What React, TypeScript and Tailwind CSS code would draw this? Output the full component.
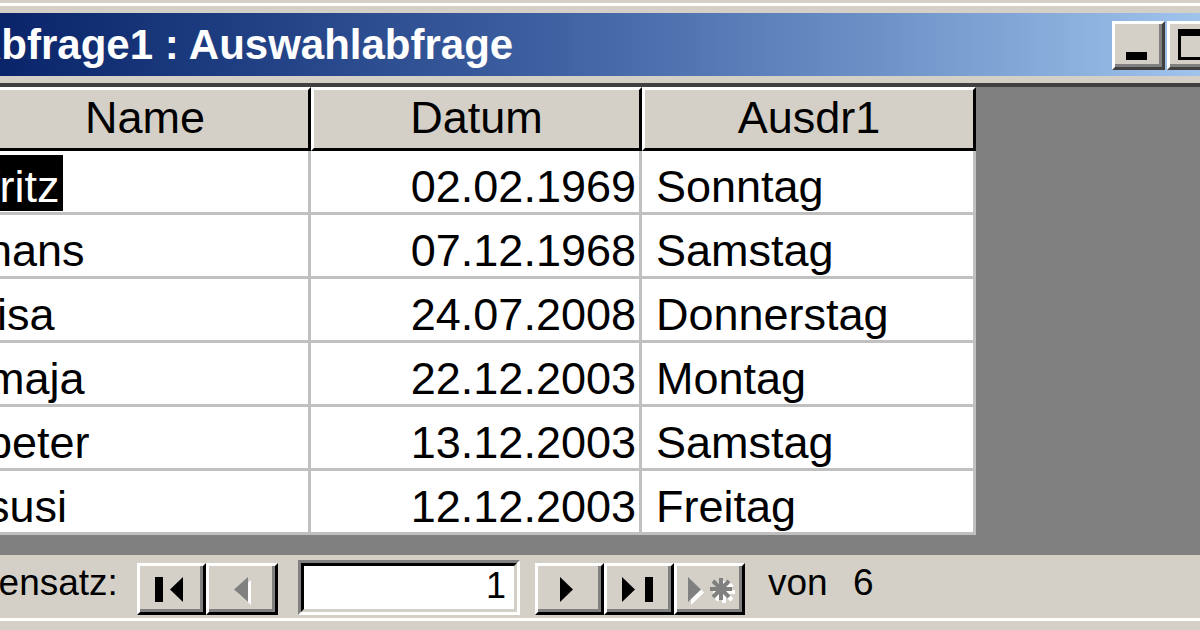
import React from "react";

const F = "font-['Liberation_Sans',Arial,sans-serif]";

const rows: [string, string, string][] = [
  ["fritz", "02.02.1969", "Sonntag"],
  ["hans", "07.12.1968", "Samstag"],
  ["lisa", "24.07.2008", "Donnerstag"],
  ["maja", "22.12.2003", "Montag"],
  ["peter", "13.12.2003", "Samstag"],
  ["susi", "12.12.2003", "Freitag"],
];

function NavButton({
  x,
  w,
  wClass,
  children,
}: {
  x: number;
  w: number;
  wClass: string;
  children: React.ReactNode;
}) {
  return (
    <div
      className={`${wClass} shrink-0 h-[52px] mt-[8px] bg-[#d4d0c8] border-t-[3px] border-l-[3px] border-r-[3px] border-b-[3px] border-t-white border-l-white border-r-black border-b-black`}
    >
      <div className="w-full h-full border-r-[3px] border-b-[3px] border-r-[#808080] border-b-[#808080]">
        <svg
          width={w - 9}
          height={43}
          viewBox={`${x + 3} 566 ${w - 9} 43`}
          className="block"
        >
          {children}
        </svg>
      </div>
    </div>
  );
}

function Asterisk({ dx, dy, color }: { dx: number; dy: number; color: string }) {
  const cx = 721 + dx;
  const cy = 589 + dy;
  return (
    <g stroke={color} strokeWidth={4} fill={color}>
      <line x1={cx} y1={cy - 11} x2={cx} y2={cy + 11} />
      <line x1={cx - 11} y1={cy} x2={cx + 11} y2={cy} />
      <line x1={cx - 8} y1={cy - 8} x2={cx + 8} y2={cy + 8} />
      <line x1={cx + 8} y1={cy - 8} x2={cx - 8} y2={cy + 8} />
      <circle cx={cx} cy={cy} r={5} stroke="none" />
    </g>
  );
}

export default function App() {
  return (
    <div
      className={`w-[1200px] h-[630px] overflow-hidden bg-[#d4d0c8] flex flex-col text-black ${F}`}
    >
      <div className="h-[3px] shrink-0" />
      <div className="h-[3px] shrink-0 bg-white" />
      <div className="h-[7px] shrink-0" />

      {/* Title bar */}
      <div className="h-[63px] shrink-0 w-[1240px] flex bg-linear-to-r from-[#0a246a] via-[#3f62a3] via-45% to-[#a6caf0]">
        <div className="flex-1 ml-[-29px] pt-[11px] text-white font-bold text-[42px] leading-[42px] whitespace-nowrap">
          Abfrage1 : Auswahlabfrage
        </div>
        <div className="flex gap-[2px] mt-[8px] mr-[20px] shrink-0">
          <div className="w-[53px] h-[49px] bg-[#d4d0c8] border-t-[3px] border-l-[3px] border-r-[3px] border-b-[3px] border-t-white border-l-white border-r-[#404040] border-b-[#404040]">
            <div className="w-full h-full border-r-[3px] border-b-[3px] border-r-[#808080] border-b-[#808080]">
              <svg width={44} height={40} viewBox="1115 24 44 40" className="block">
                <rect x={1126} y={52} width={21} height={8} fill="#000" />
              </svg>
            </div>
          </div>
          <div className="w-[53px] h-[49px] bg-[#d4d0c8] border-t-[3px] border-l-[3px] border-r-[3px] border-b-[3px] border-t-white border-l-white border-r-[#404040] border-b-[#404040]">
            <div className="w-full h-full border-r-[3px] border-b-[3px] border-r-[#808080] border-b-[#808080]">
              <svg width={44} height={40} viewBox="1170 24 44 40" className="block">
                <rect x={1178} y={29} width={27} height={7} fill="#000" />
                <rect x={1178} y={29} width={3} height={31} fill="#000" />
                <rect x={1202} y={29} width={3} height={31} fill="#000" />
                <rect x={1178} y={57} width={27} height={3} fill="#000" />
              </svg>
            </div>
          </div>
        </div>
      </div>

      <div className="h-[7px] shrink-0" />
      <div className="h-[4px] shrink-0 bg-[#404040]" />

      {/* Datasheet area */}
      <div className="h-[468px] shrink-0 bg-[#808080] flex">
        <div className="ml-[-21px] shrink-0 flex flex-col">
          <div className="flex h-[64px] shrink-0">
            {[
              ["w-[332px]", "Name"],
              ["w-[331px]", "Datum"],
              ["w-[334px]", "Ausdr1"],
            ].map(([w, t]) => (
              <div
                key={t}
                className={`${w} h-full bg-[#d4d0c8] border-t-[3px] border-l-[3px] border-r-[3px] border-b-[3px] border-t-white border-l-white border-r-black border-b-black text-center text-[45px] leading-[44px] pt-[6px]`}
              >
                {t}
              </div>
            ))}
          </div>
          {rows.map(([name, date, day], i) => (
            <div key={name} className="flex h-[64px] shrink-0 text-[45px] leading-[44px]">
              <div
                className={`w-[332px] h-full bg-white border-r-[3px] border-b-[3px] border-[#c0c0c0] flex items-start pl-[5px] ${
                  i === 0 ? "pt-[4px]" : "pt-[14px]"
                }`}
              >
                {i === 0 ? (
                  <span className="bg-black text-white px-[3px] pt-[10px] pb-[2px]">{name}</span>
                ) : (
                  <span className="px-[3px]">{name}</span>
                )}
              </div>
              <div className="w-[331px] h-full bg-white border-r-[3px] border-b-[3px] border-[#c0c0c0] flex items-start justify-end pt-[14px]">
                <span className="px-[3px]">{date}</span>
              </div>
              <div className="w-[334px] h-full bg-white border-r-[3px] border-b-[3px] border-[#c0c0c0] flex items-start pl-[11px] pt-[14px]">
                <span className="px-[3px]">{day}</span>
              </div>
            </div>
          ))}
        </div>
      </div>

      {/* Navigation bar */}
      <div className="h-[63px] shrink-0 flex items-start">
        <div className="w-[196px] ml-[-59px] shrink-0 mt-[10px] text-[37px] leading-[36px] whitespace-nowrap">
          Datensatz:
        </div>
        <NavButton x={137} w={69} wClass="w-[69px]">
          <rect x={155} y={577} width={8} height={25} fill="#000" />
          <polygon points="183,577 183,602 170,589.5" fill="#000" />
        </NavButton>
        <NavButton x={206} w={72} wClass="w-[72px]">
          <polygon points="251,580 251,605 237,592.5" fill="#fff" />
          <polygon points="248,577 248,602 234,589.5" fill="#808080" />
        </NavButton>
        <div className="ml-[20px] mt-[5px] w-[222px] h-[55px] shrink-0 border-t-[3px] border-l-[3px] border-r-[3px] border-b-[3px] border-t-[#808080] border-l-[#808080] border-r-white border-b-white">
          <div className="w-full h-full bg-white border-t-[3px] border-l-[3px] border-r-[3px] border-b-[3px] border-t-black border-l-black border-r-[#d4d0c8] border-b-[#d4d0c8] text-right pr-[8px] pt-[4px] text-[36px] leading-[32px]">
            1
          </div>
        </div>
        <div className="ml-[15px] flex shrink-0">
          <NavButton x={535} w={69} wClass="w-[69px]">
            <polygon points="560,577 560,602 573,589.5" fill="#000" />
          </NavButton>
          <NavButton x={604} w={70} wClass="w-[70px]">
            <polygon points="622,577 622,602 635,589.5" fill="#000" />
            <rect x={645} y={577} width={8} height={25} fill="#000" />
          </NavButton>
          <NavButton x={674} w={71} wClass="w-[71px]">
            <polygon points="691,580 691,605 704,592.5" fill="#fff" />
            <Asterisk dx={3} dy={3} color="#fff" />
            <polygon points="688,577 688,602 701,589.5" fill="#808080" />
            <Asterisk dx={0} dy={0} color="#808080" />
          </NavButton>
        </div>
        <div className="ml-[23px] mt-[10px] flex text-[37px] leading-[36px] whitespace-nowrap">
          <span className="w-[85px]">von</span>
          <span>6</span>
        </div>
      </div>
      <div className="h-[3px] shrink-0 bg-white" />
      <div className="flex-1" />
    </div>
  );
}
